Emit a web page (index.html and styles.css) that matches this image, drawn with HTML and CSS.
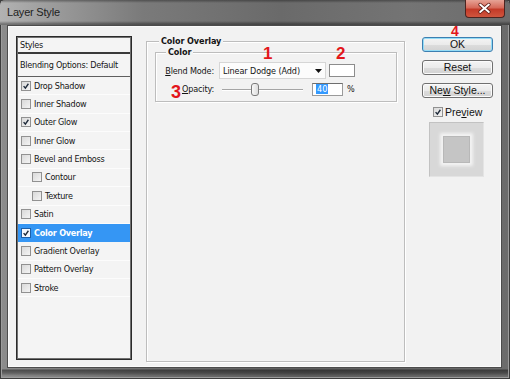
FILE: index.html
```html
<!DOCTYPE html>
<html>
<head>
<meta charset="utf-8">
<title>Layer Style</title>
<link rel="stylesheet" href="styles.css">
</head>
<body>
<div class="window">
  <div class="titlebar">
    <span class="title">Layer Style</span>
    <span class="close">
      <svg width="40" height="18" viewBox="0 0 40 18"><path d="M15.5 4.5 L24.5 12 M24.5 4.5 L15.5 12" stroke="#5a1a14" stroke-width="3.6" stroke-linecap="round"/><path d="M15.5 4.5 L24.5 12 M24.5 4.5 L15.5 12" stroke="#ffffff" stroke-width="2" stroke-linecap="round"/></svg>
    </span>
  </div>
  <div class="client">
    <div class="styles-list">
      <div class="list-head">Styles</div>
      <div class="list-blend">Blending Options: Default</div>
      <div class="item"><span class="cb on"><svg viewBox="0 0 10 10"><path d="M2 5.2 L4.2 7.6 L8 2.2"/></svg></span>Drop Shadow</div>
      <div class="item"><span class="cb"></span>Inner Shadow</div>
      <div class="item"><span class="cb on"><svg viewBox="0 0 10 10"><path d="M2 5.2 L4.2 7.6 L8 2.2"/></svg></span>Outer Glow</div>
      <div class="item"><span class="cb"></span>Inner Glow</div>
      <div class="item"><span class="cb"></span>Bevel and Emboss</div>
      <div class="item sub"><span class="cb"></span>Contour</div>
      <div class="item sub"><span class="cb"></span>Texture</div>
      <div class="item"><span class="cb"></span>Satin</div>
      <div class="item selected"><span class="cb on"><svg viewBox="0 0 10 10"><path d="M2 5.2 L4.2 7.6 L8 2.2"/></svg></span>Color Overlay</div>
      <div class="item"><span class="cb"></span>Gradient Overlay</div>
      <div class="item"><span class="cb"></span>Pattern Overlay</div>
      <div class="item"><span class="cb"></span>Stroke</div>
    </div>

    <fieldset class="group outer">
      <legend>Color Overlay</legend>
      <fieldset class="group inner">
        <legend>Color</legend>
        <div class="row blend-row">
          <span class="lbl"><u>B</u>lend Mode:</span>
          <span class="select">Linear Dodge (Add)<svg class="arrow" width="7" height="4" viewBox="0 0 7 4"><path d="M0 0 H7 L3.5 4 Z" fill="#111"/></svg></span>
          <span class="swatch"></span>
        </div>
        <div class="row opacity-row">
          <span class="lbl"><u>O</u>pacity:</span>
          <span class="slider"><span class="track"></span><span class="thumb"></span></span>
          <span class="field"><span class="sel">40</span></span>
          <span class="pct">%</span>
        </div>
      </fieldset>
    </fieldset>

    <div class="actions">
      <button class="btn default">OK</button>
      <button class="btn">Reset</button>
      <button class="btn">Ne<u>w</u> Style...</button>
      <div class="preview-row"><span class="cb on"><svg viewBox="0 0 10 10"><path d="M2 5.2 L4.2 7.6 L8 2.2"/></svg></span>Pre<u>v</u>iew</div>
      <div class="preview-box"><span class="preview-inner"></span></div>
    </div>
  </div>

  <span class="mark m1">1</span>
  <span class="mark m2">2</span>
  <span class="mark m3">3</span>
  <span class="mark m4">4</span>
</div>
</body>
</html>
```

FILE: styles.css
```css
* { box-sizing: border-box; }
html, body { margin: 0; padding: 0; }
body {
  width: 510px;
  height: 379px;
  overflow: hidden;
  background: #6a6a6a;
  font-family: "DejaVu Sans Condensed", "Liberation Sans", sans-serif;
  font-size: 9px;
  color: #141414;
}

.window {
  position: relative;
  width: 510px;
  height: 379px;
  display: flex;
  flex-direction: column;
  background:
    linear-gradient(180deg, rgba(0,0,0,0) 369px, rgba(0,0,0,0.45) 370px, rgba(0,0,0,0.3) 373px, rgba(0,0,0,0) 376px),
    linear-gradient(90deg, #8c8c8c 0%, #6e6e6e 30%, #5e5e5e 60%, #6c6c6c 100%);
  box-shadow: inset 0 0 0 1px #3c3c3c, inset 0 0 0 2px #9c9c9c;
}

.titlebar {
  height: 25px;
  flex: none;
  display: flex;
  align-items: flex-start;
  background:
    linear-gradient(180deg, rgba(0,0,0,0.35) 0, rgba(0,0,0,0) 3px, rgba(0,0,0,0) 21px, rgba(0,0,0,0.35) 24px),
    linear-gradient(90deg, #b2b2b2 0%, #9c9c9c 10%, #7a7a7a 28%, #6a6a6a 55%, #747474 80%, #6c6c6c 100%);
  border-radius: 5px 5px 0 0;
}

.title {
  padding-left: 7px;
  line-height: 25px;
  font-family: "Liberation Sans", sans-serif;
  font-size: 11px;
  letter-spacing: -0.2px;
  color: #1e1e1e;
}

.close {
  margin-left: auto;
  margin-right: 5px;
  margin-top: 0;
  width: 40px;
  height: 18px;
  border: 1px solid #4b2420;
  border-top: none;
  border-radius: 0 0 4px 4px;
  background: linear-gradient(180deg, #e6a396 0%, #d66a5a 45%, #c33a28 55%, #d0553e 100%);
  display: flex;
}
.close svg { display: block; margin-left: -1px; }

.client {
  flex: none;
  height: 343px;
  margin: 0 8px 0 7px;
  border: 1px solid #4c4c4c;
  background: #f2f2f2;
  box-shadow: inset 0 0 0 1px #fbfbfb;
  display: flex;
  align-items: flex-start;
  padding: 10px 0 0 8px;
}

/* ---------- styles list ---------- */
.styles-list {
  flex: none;
  width: 116px;
  height: 324px;
  border: 1px solid #2a2a2a;
  box-shadow: inset 0 0 0 1px #707070;
  background: #f4f4f4;
  padding: 1px;
  color: #141414;
  letter-spacing: -0.25px;
}
.list-head {
  height: 16px;
  line-height: 15px;
  padding-left: 2px;
  border-bottom: 2px solid #3a3a3a;
}
.list-blend {
  height: 23px;
  line-height: 23px;
  padding-left: 2px;
  border-bottom: 1px solid #5e5e5e;
}
.item {
  height: 18.36px;
  display: flex;
  align-items: center;
  padding-left: 3px;
  border-bottom: 1px solid #fcfcfc;
}
.item.sub { padding-left: 14px; }
.item.selected {
  background: #3596f4;
  color: #ffffff;
  font-weight: bold;
  border-bottom-color: #3596f4;
}

.cb {
  flex: none;
  width: 10px;
  height: 10px;
  margin-right: 3px;
  border: 1px solid #919191;
  background: linear-gradient(135deg, #d9d9d9 0%, #f4f4f4 100%);
  display: flex;
}
.cb svg { width: 8px; height: 8px; }
.cb svg path { fill: none; stroke: #1e2a3a; stroke-width: 1.7; }
.selected .cb { background: #f4f8ff; border-color: #1e5fa8; }

/* ---------- groups ---------- */
.group {
  margin: 0;
  padding: 0;
  min-width: 0;
  border: 1px solid #bdbdbd;
  box-shadow: inset 1px 1px 0 #ffffff, 1px 1px 0 #ffffff;
}
.group legend {
  margin-left: 12px;
  padding: 0 2px;
  line-height: 11px;
  font-weight: bold;
  background: #f2f2f2;
  letter-spacing: -0.1px;
}
.outer {
  flex: none;
  width: 259px;
  height: 326px;
  margin-left: 14px;
}
.inner {
  margin: 0 7px 0 8px;
  padding: 4px 0 3px 0;
}
.inner legend { margin-left: 10px; }

.row {
  display: flex;
  align-items: center;
  height: 17px;
}
.opacity-row { margin-top: 1.5px; }
.lbl {
  flex: none;
  width: 58px;
  text-align: right;
  letter-spacing: -0.15px;
}
.select {
  flex: none;
  margin-left: 5px;
  width: 107px;
  height: 17px;
  border: 1px solid #d6d6d6;
  background: #fcfcfc;
  display: flex;
  align-items: center;
  padding-left: 3px;
  letter-spacing: -0.1px;
}
.select .arrow { margin-left: auto; margin-right: 3px; }
.swatch {
  flex: none;
  margin-left: 3px;
  width: 26px;
  height: 13px;
  border: 1px solid #8c8c8c;
  background: #ffffff;
}
.slider {
  flex: none;
  position: relative;
  margin-left: 8px;
  width: 81px;
  height: 15px;
}
.track {
  position: absolute;
  left: 0;
  right: 0;
  top: 7px;
  height: 2px;
  border-top: 1px solid #a5a5a5;
  border-bottom: 1px solid #ffffff;
}
.thumb {
  position: absolute;
  left: 29px;
  top: 1px;
  width: 8px;
  height: 13px;
  border: 1px solid #7b7b7b;
  border-radius: 3px;
  background: linear-gradient(90deg, #f8f8f8, #dcdcdc);
}
.field {
  flex: none;
  margin-left: 9px;
  width: 31px;
  height: 13px;
  border: 1px solid #9a9a9a;
  border-top-color: #6e6e6e;
  background: #ffffff;
  display: flex;
  align-items: center;
  padding-left: 3px;
}
.sel {
  background: #3399ff;
  color: #ffffff;
  line-height: 10px;
  padding: 0 1px;
}
.pct { margin-left: 4px; }

/* ---------- actions ---------- */
.actions {
  flex: none;
  width: 71px;
  margin-left: 17px;
  padding-top: 1px;
  display: flex;
  flex-direction: column;
  gap: 8px;
}
.btn {
  width: 71px;
  height: 15px;
  padding: 0;
  border: 1px solid #707070;
  border-radius: 3px;
  background: linear-gradient(180deg, #f4f4f4 0%, #ebebeb 50%, #dddddd 51%, #d2d2d2 100%);
  box-shadow: inset 0 0 0 1px #fbfbfb;
  font-family: "Liberation Sans", sans-serif;
  font-size: 10.5px;
  line-height: 13px;
  color: #111;
}
.btn.default {
  border-color: #3c7fb1;
  box-shadow: inset 0 0 0 1px #94dcf6;
}
.preview-row {
  display: flex;
  align-items: center;
  height: 12px;
  padding-left: 11px;
  font-family: "Liberation Sans", sans-serif;
  font-size: 10.5px;
}
.preview-row .cb { margin-right: 2px; }
.preview-box {
  margin-top: -4px;
  margin-left: 7px;
  width: 55px;
  height: 55px;
  border: 1px solid #c2c2c2;
  border-right-color: #e4e4e4;
  border-bottom-color: #e4e4e4;
  background: #d8d8d8;
  display: flex;
  align-items: center;
  justify-content: center;
}
.preview-inner {
  width: 27px;
  height: 27px;
  background: #c5c5c5;
  border: 1px solid #b8b8b8;
  box-shadow: 0 0 3px 3px #f3f3f3;
}

/* ---------- annotation numbers ---------- */
.mark {
  position: absolute;
  font-family: "Liberation Sans", sans-serif;
  font-weight: bold;
  color: #e3161b;
  line-height: 1;
}
.m1 { left: 263px; top: 45px; font-size: 17px; }
.m2 { left: 336px; top: 45px; font-size: 17px; }
.m3 { left: 171px; top: 83px; font-size: 18px; }
.m4 { left: 451px; top: 26px; font-size: 14px; line-height: 10px; }
```
